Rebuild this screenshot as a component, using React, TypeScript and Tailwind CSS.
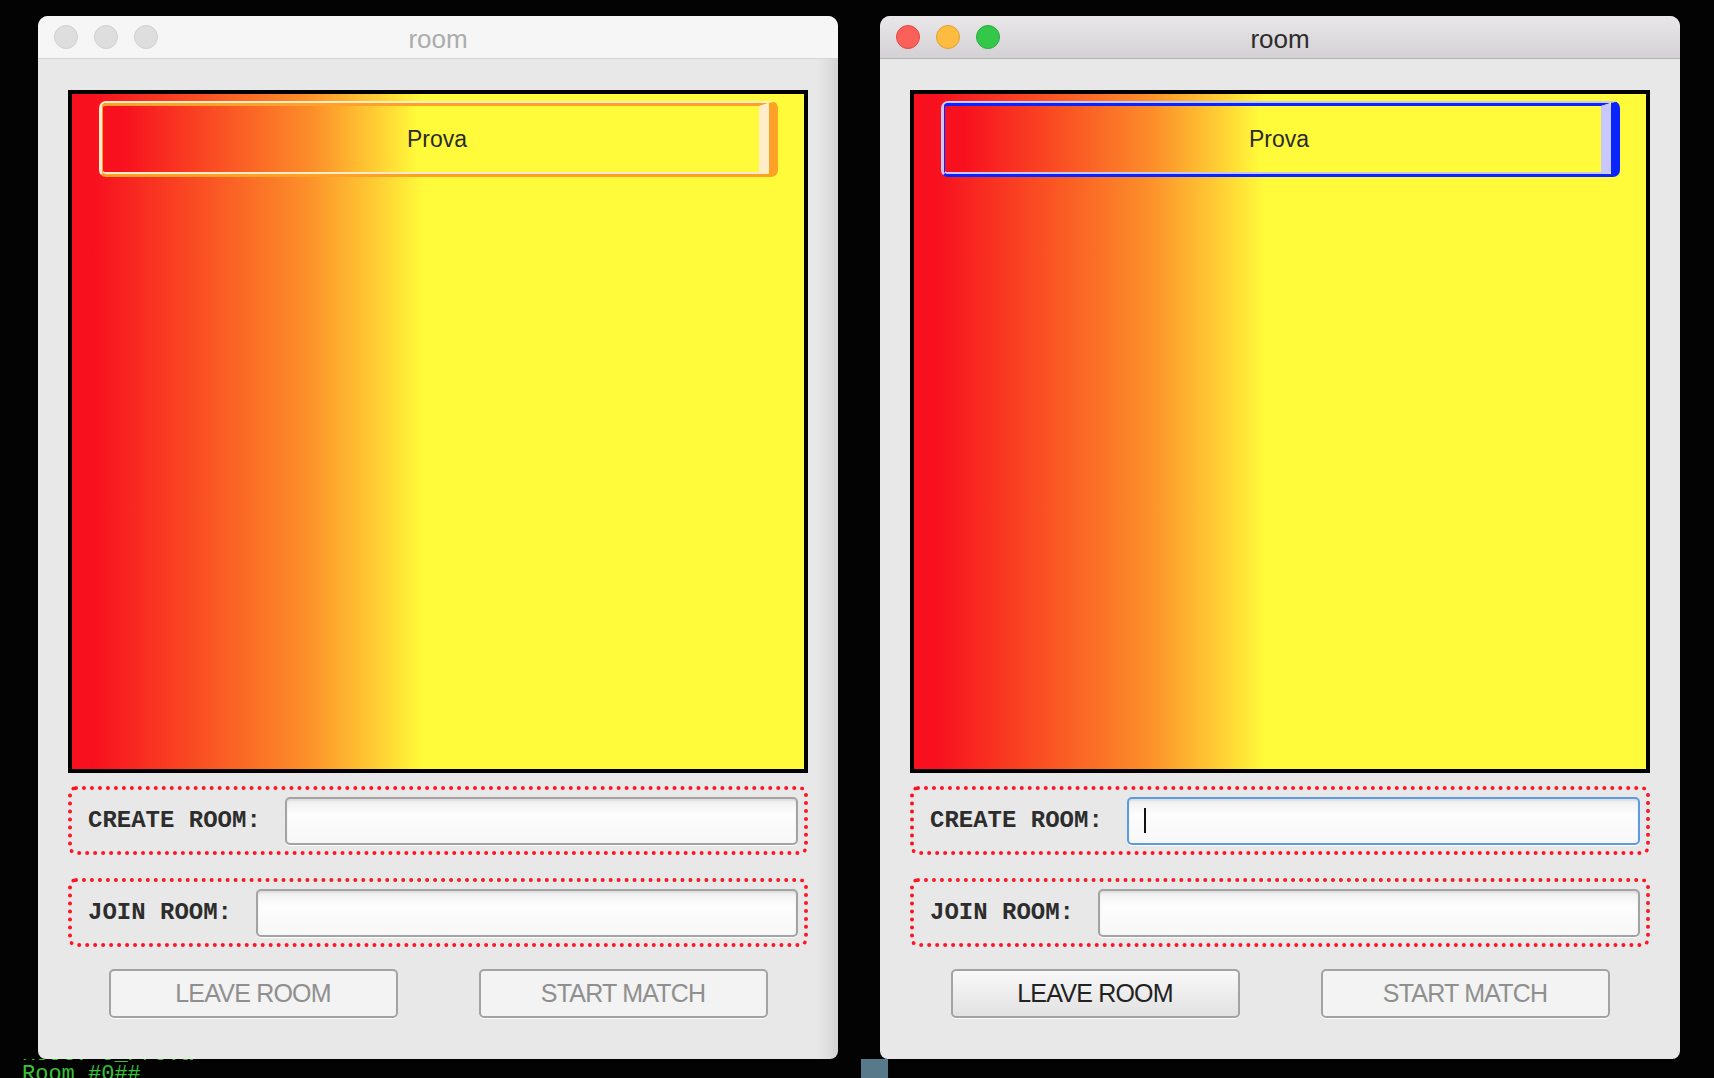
import React from "react";

const SANS = "font-['Liberation_Sans',Arial,sans-serif]";
const MONO = "font-['Liberation_Mono','Courier_New',monospace]";
const GRAD =
  "bg-[linear-gradient(to_right,#f8101f_3%,#fa5a24_20%,#fc8f2a_32%,#ffd034_42%,#fffb3a_48%)]";

type WinProps = { active: boolean };

function Lights({ active }: WinProps) {
  const dots = active
    ? [
        "bg-[#fc605b] border-[#e0463f]",
        "bg-[#fdbc40] border-[#e0a030]",
        "bg-[#34c84a] border-[#2aab3a]",
      ]
    : [
        "bg-[#dedede] border-[#d0d0d0]",
        "bg-[#dedede] border-[#d0d0d0]",
        "bg-[#dedede] border-[#d0d0d0]",
      ];
  return (
    <div className="flex gap-[16px] pl-[16px]">
      {dots.map((c, i) => (
        <span key={i} className={`block w-[24px] h-[24px] rounded-full border ${c}`} />
      ))}
    </div>
  );
}

function ProvaButton({ active }: WinProps) {
  const outer = active
    ? "border-t-[#c8c8ff] border-l-[#c8c8ff] border-r-[#0a24ff] border-b-[#0a24ff]"
    : "border-t-[#ffecc8] border-l-[#ffecc8] border-r-[#ffa126] border-b-[#ffa126]";
  const inner = active
    ? "border-t-[#0a24ff] border-l-[#0a24ff] border-r-[#c8c8ff] border-b-[#c8c8ff]"
    : "border-t-[#ffa126] border-l-[#ffa126] border-r-[#ffecc8] border-b-[#ffecc8]";
  return (
    <div
      className={`mt-[7px] ml-[27px] mr-[26px] rounded-[7px] border-solid border-t-2 border-l-[3px] border-r-[9px] border-b-[3px] ${outer}`}
    >
      <div
        className={`h-[71px] rounded-[4px] border-solid border-t-[3px] border-l border-r-[10px] border-b-2 ${inner} ${GRAD} flex items-center justify-center pl-[12px]`}
      >
        <span className={`${SANS} text-[23px] text-[#2b2b2b]`}>Prova</span>
      </div>
    </div>
  );
}

function Field({ label, focused }: { label: string; focused?: boolean }) {
  return (
    <div className="h-[69px] rounded-[8px] border-4 border-dotted border-[#ff1423] flex items-center pl-[16px] pr-[6px]">
      <span className={`${MONO} font-bold text-[24px] leading-none text-[#2d2d2d] whitespace-pre`}>
        {label}
      </span>
      <div
        className={`ml-[24px] flex-1 h-[48px] rounded-[5px] border-2 ${
          focused ? "border-[#5d9be0]" : "border-[#a3a3a3]"
        } bg-[linear-gradient(#efefef,#fdfdfd_35%,#f7f7f7)] shadow-[inset_0_2px_2px_rgba(0,0,0,0.08),0_1px_0_#ffffff] flex items-center`}
      >
        {focused && <span className="block ml-[15px] w-[2px] h-[25px] bg-[#111]" />}
      </div>
    </div>
  );
}

function PushButton({ label, enabled }: { label: string; enabled?: boolean }) {
  return (
    <div
      className={`w-[289px] h-[49px] rounded-[5px] border-2 border-[#a3a3a3] flex items-center justify-center shadow-[0_1px_0_#ffffff] ${
        enabled
          ? "bg-[linear-gradient(#f8f8f8,#e2e2e2)] text-[#222]"
          : "bg-[#f3f3f3] text-[#8f8f8f]"
      }`}
    >
      <span className={`${SANS} text-[25px] tracking-[-0.8px]`}>{label}</span>
    </div>
  );
}

function RoomWindow({ active }: WinProps) {
  return (
    <div className="w-[800px] h-[1043px] rounded-t-[10px] rounded-b-[8px] overflow-hidden bg-[#e8e8e8] flex flex-col">
      <div
        className={`h-[43px] shrink-0 grid grid-cols-[1fr_auto_1fr] items-center border-b ${
          active
            ? "bg-[linear-gradient(#e9e7e9,#d3d1d3)] border-[#b3b3b3]"
            : "bg-[#f6f6f6] border-[#d6d6d6]"
        }`}
      >
        <Lights active={active} />
        <span
          className={`${SANS} text-[26px] leading-none pt-[3px] ${
            active ? "text-[#2c2c2c]" : "text-[#acacac]"
          }`}
        >
          room
        </span>
        <span />
      </div>
      <div
        className={`flex-1 pt-[31px] px-[30px] ${
          active ? "" : "shadow-[inset_-22px_0_18px_-16px_rgba(0,0,0,0.12)]"
        }`}
      >
        <div className={`h-[683px] border-4 border-black ${GRAD} flex flex-col`}>
          <ProvaButton active={active} />
        </div>
        <div className="mt-[13px]">
          <Field label="CREATE ROOM:" focused={active} />
        </div>
        <div className="mt-[23px]">
          <Field label="JOIN ROOM:" />
        </div>
        <div className="mt-[22px] flex justify-center gap-[81px]">
          <PushButton label="LEAVE ROOM" enabled={active} />
          <PushButton label="START MATCH" />
        </div>
      </div>
    </div>
  );
}

export default function App() {
  return (
    <div className="w-[1714px] h-[1078px] bg-[#030303] overflow-hidden flex flex-col">
      <div className="pt-[16px] pl-[38px] flex gap-[42px]">
        <RoomWindow active={false} />
        <RoomWindow active={true} />
      </div>
      <div className="h-[19px] overflow-hidden flex">
        <div className={`w-[861px] pl-[22px] -mt-[14px] ${MONO} text-[22px] leading-[20px] text-[#36c23a]`}>
          <div>Root: c_Prova</div>
          <div>Room #0##</div>
        </div>
        <div className="w-[27px] h-full bg-[#58798a]" />
      </div>
    </div>
  );
}
